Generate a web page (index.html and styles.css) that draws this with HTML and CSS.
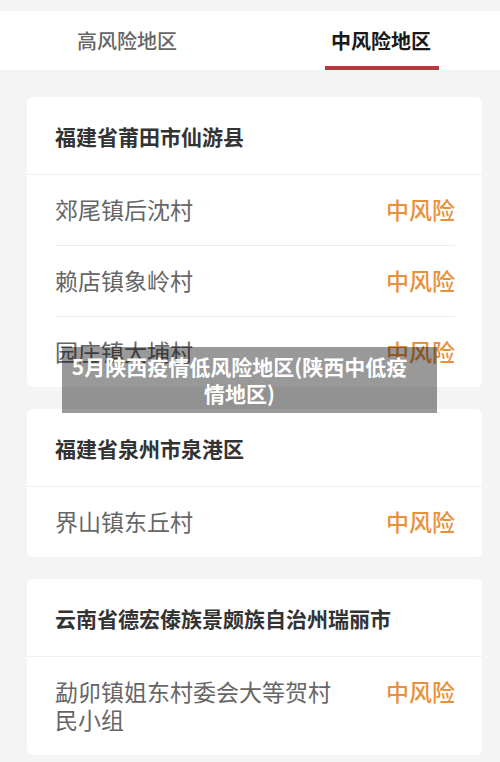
FILE: index.html
```html
<!DOCTYPE html>
<html lang="zh-CN">

<head>
  <meta charset="UTF-8">
  <meta name="viewport" content="width=device-width, initial-scale=1.0">
  <title>中风险地区</title>
  <link rel="stylesheet" href="styles.css">
</head>

<body>
  <!-- Tabs -->
  <div class="tabs">
    <div class="tab">高风险地区</div>
    <div class="tab active">中风险地区</div>
  </div>

  <!-- Area list -->
  <div class="list">
    <div class="card">
      <div class="card-title">福建省莆田市仙游县</div>
      <div class="row">
        <div class="row-name">郊尾镇后沈村</div>
        <div class="row-level">中风险</div>
      </div>
      <div class="row">
        <div class="row-name">赖店镇象岭村</div>
        <div class="row-level">中风险</div>
      </div>
      <div class="row">
        <div class="row-name">园庄镇大埔村</div>
        <div class="row-level">中风险</div>
      </div>
    </div>

    <div class="card">
      <div class="card-title">福建省泉州市泉港区</div>
      <div class="row">
        <div class="row-name">界山镇东丘村</div>
        <div class="row-level">中风险</div>
      </div>
    </div>

    <div class="card">
      <div class="card-title">云南省德宏傣族景颇族自治州瑞丽市</div>
      <div class="row">
        <div class="row-name">勐卯镇姐东村委会大等贺村民小组</div>
        <div class="row-level">中风险</div>
      </div>
    </div>
  </div>

  <!-- Article title overlay -->
  <div class="caption">5月陕西疫情低风险地区(陕西中低疫情地区)</div>
</body>

</html>
```

FILE: styles.css
```css
body {
  margin: 0;
  padding: 11px 0 0;
  background-color: #f4f4f4;
  font-family: "Noto Sans CJK SC", "Noto Sans", sans-serif;
  color: #333;
  overflow: hidden;
}

.tabs {
  display: grid;
  grid-template-columns: 254px 254px;
  height: 59px;
  background-color: #fff;
  overflow: hidden;
}

.tab {
  position: relative;
  display: flex;
  align-items: center;
  justify-content: center;
  font-size: 20px;
  font-weight: 500;
  color: #666;
}

.tab.active {
  color: #1a1a1a;
  font-weight: 700;
}

.tab.active::after {
  content: "";
  position: absolute;
  left: 71px;
  bottom: 0;
  width: 114px;
  height: 4px;
  background-color: #b43a40;
}

.list {
  display: flex;
  flex-direction: column;
  gap: 22px;
  padding: 27px 18px 0 27px;
}

.card {
  background-color: #fff;
  border-radius: 6px;
}

.card-title {
  height: 77px;
  display: flex;
  align-items: center;
  padding: 0 28px;
  font-size: 21px;
  font-weight: 700;
  color: #333;
  border-bottom: 1px solid #f0f0f0;
}

.row {
  display: flex;
  align-items: flex-start;
  margin: 0 27px 0 28px;
  padding: 20px 0 22px;
  font-size: 23px;
  line-height: 28px;
  border-bottom: 1px solid #eee;
}

.row:last-child {
  border-bottom: none;
}

.row-name {
  flex: 1;
  padding-right: 40px;
  color: #666;
}

.row-level {
  color: #e8913a;
  font-weight: 500;
}

.caption {
  position: absolute;
  left: 62px;
  top: 347px;
  width: 351px;
  height: 66px;
  padding: 0 22px 0 2px;
  display: flex;
  align-items: center;
  justify-content: center;
  text-align: center;
  background-color: rgba(0, 0, 0, 0.4);
  color: #fff;
  font-size: 21px;
  font-weight: 700;
  line-height: 27px;
}
```
